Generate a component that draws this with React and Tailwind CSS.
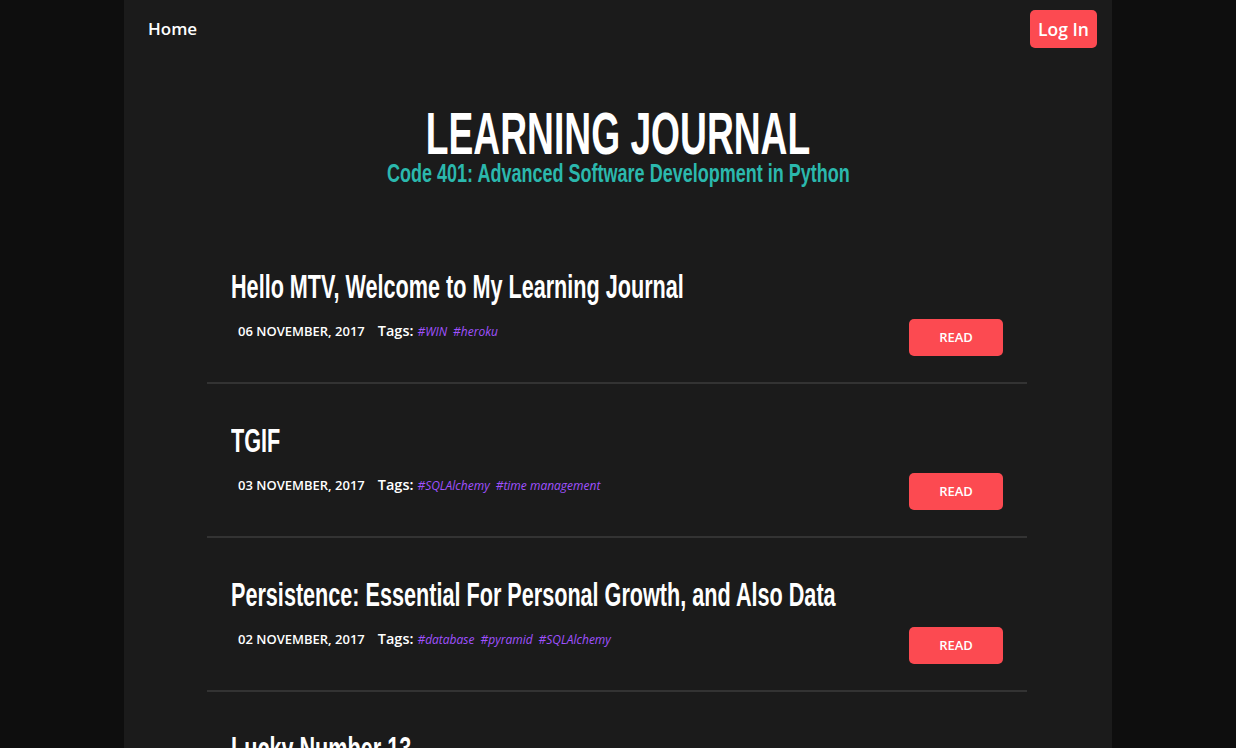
import React from "react";

const posts = [
  { title: "Hello MTV, Welcome to My Learning Journal", date: "06 NOVEMBER, 2017", tags: ["#WIN", "#heroku"] },
  { title: "TGIF", date: "03 NOVEMBER, 2017", tags: ["#SQLAlchemy", "#time management"] },
  { title: "Persistence: Essential For Personal Growth, and Also Data", date: "02 NOVEMBER, 2017", tags: ["#database", "#pyramid", "#SQLAlchemy"] },
  { title: "Lucky Number 13", date: "01 NOVEMBER, 2017", tags: ["#python", "#pyramid"] },
];

const display = { fontFamily: '"Liberation Sans", Arial, sans-serif' };
const body = { fontFamily: '"Open Sans", "Noto Sans", sans-serif' };

export default function App() {
  return (
    <div className="min-h-screen bg-[#0e0e0e] flex justify-center" style={body}>
      <div className="w-[988px] min-h-screen bg-[#1b1b1b] pb-10">
        <nav className="h-[58px] flex items-center justify-between pl-[24px] pr-[15px]">
          <a className="text-[17px] font-semibold text-white">Home</a>
          <button className="h-[38px] px-[8px] rounded-[5px] bg-[#fc4a51] text-white text-[17.5px] font-semibold">
            Log In
          </button>
        </nav>
        <header className="mt-[52px] flex flex-col items-center">
          <h1 className="text-[60px] leading-[48px] font-bold text-white scale-x-[0.62] whitespace-nowrap" style={display}>
            LEARNING JOURNAL
          </h1>
          <h2 className="text-[26.5px] leading-[30px] font-bold text-[#2bb8ad] scale-x-[0.68] whitespace-nowrap" style={display}>
            Code 401: Advanced Software Development in Python
          </h2>
        </header>
        <main className="mt-[42px] ml-[83px] w-[820px]">
          {posts.map((p) => (
            <article key={p.title} className="pt-[37px] pb-[26px] px-[24px] border-b-2 border-[#333333]">
              <h3 className="text-[33px] leading-[40px] font-bold text-white origin-left scale-x-[0.655] whitespace-nowrap" style={display}>
                {p.title}
              </h3>
              <div className="mt-[12px] flex items-start justify-between">
                <div className="pt-[2px] pl-[7px] flex items-baseline text-white">
                  <span className="text-[13px] leading-[20px] font-semibold">{p.date}</span>
                  <span className="ml-[13px] text-[14.5px] leading-[20px] font-semibold">Tags:</span>
                  {p.tags.map((t, i) => (
                    <a key={t} className={(i === 0 ? "ml-[4px]" : "ml-[6px]") + " text-[12px] italic text-[#a052ff]"}>{t}</a>
                  ))}
                </div>
                <button className="w-[94px] h-[37px] rounded-[5px] bg-[#fc4a51] text-white text-[13px] font-semibold">
                  READ
                </button>
              </div>
            </article>
          ))}
        </main>
      </div>
    </div>
  );
}
